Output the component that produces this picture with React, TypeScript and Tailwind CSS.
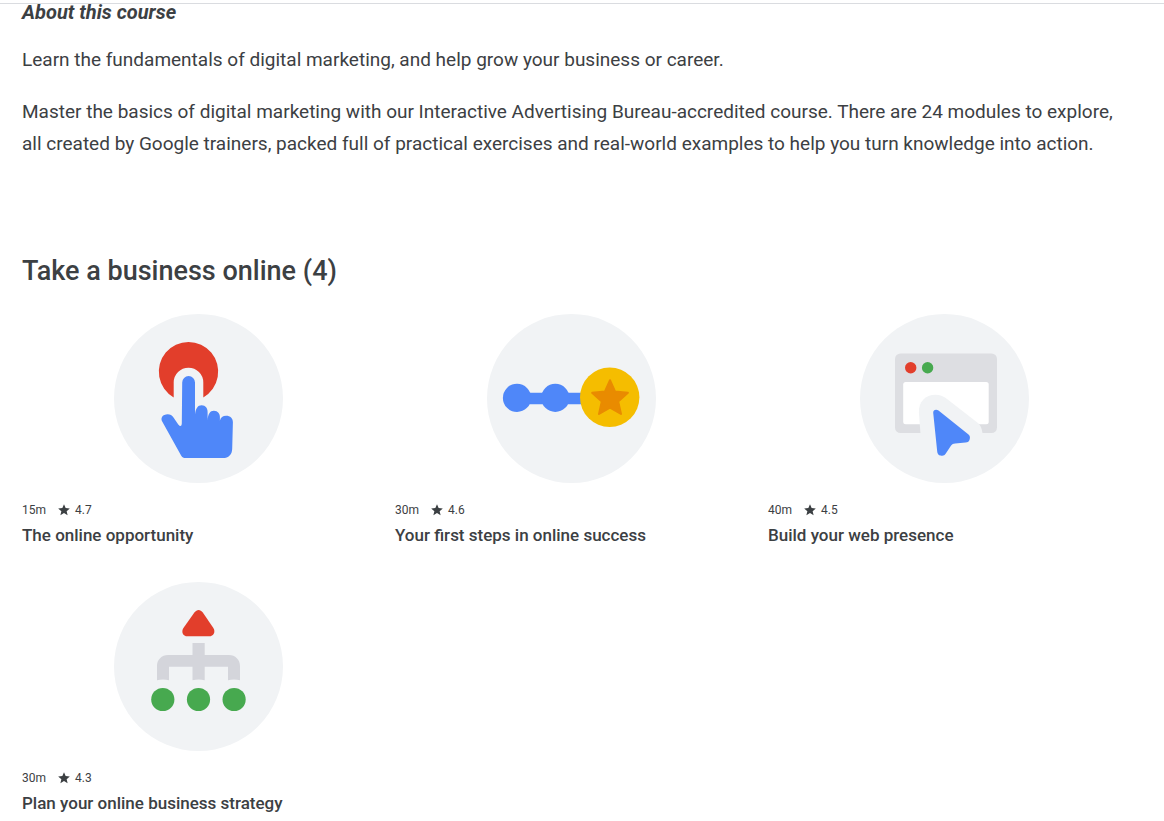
import type { ReactNode } from 'react';

type Lesson = {
  title: string;
  duration: string;
  rating: string;
  art: ReactNode;
};

function TapArt() {
  return (
    <>
      <path fill="#e23e2b" d="M65.7 89.4A29.7 29.7 0 1 1 95.3 89.4V74.5a14.8 14.8 0 0 0-29.6 0Z" />
      <path
        fill="#4f87f9"
        d="M74.2 74.5a6.4 6.4 0 0 1 12.8 0V106.500c.6-6 2.800-9.300 6.600-9.300 4 0 6 3 6 7V112.500c.3-6.500 2.500-9.700 6.300-9.700 4 0 6 3 6 6.500v3.500c.6-3.400 3-5 6.200-5 4.200 0 6.800 2.600 6.800 6.500l-.7 26.500c-.1 5.800-3.600 9.300-9.300 9.300H77.800c-2.300 0-3.600-.6-4.700-2.500L54.200 113.500c-2-3.500.5-7.200 5.500-7.200 2.500 0 4.300 1 5.800 3.200l4.600 6.700c1.800 2.600 3.500 2.400 3.700-.7Z"
      />
    </>
  );
}

function StepsArt() {
  return (
    <>
      <g fill="#4f87f9">
        <path d="M36 84.800h66v11.400H36z" />
        <circle cx="36" cy="89.900" r="14.100" />
        <circle cx="74.300" cy="89.900" r="14.100" />
      </g>
      <circle cx="128.700" cy="89.300" r="29.700" fill="#f5bd00" />
      <path
        fill="#e98b00"
        stroke="#e98b00"
        strokeWidth="2"
        strokeLinejoin="round"
        d="m129 72.200 5 11.200 12.900 1.400-9.700 8.600 2.800 12.600-11-6.300-11 6.300 2.800-12.600-9.700-8.600 12.900-1.400Z"
      />
    </>
  );
}

function BrowserArt() {
  return (
    <>
      <rect x="41" y="45.500" width="102" height="79.500" rx="5.500" fill="#dddee2" />
      <rect x="49.200" y="74" width="85.500" height="42.300" rx="2.500" fill="#fff" />
      <circle cx="56.700" cy="59.800" r="5.700" fill="#e23e2b" />
      <circle cx="73.600" cy="59.800" r="5.700" fill="#47a94f" />
      <path
        fill="#f1f3f5"
        d="M64.900 104.500c-.6-10.500 6.600-17.700 16.500-17.700 4.300 0 7.700 1.300 11.300 3.900l31.500 24.500c2.300 1.900 3.500 4.800 4.300 9.800v5H66.800Z"
      />
      <path
        fill="#4f87f9"
        d="M79.200 104.800c-.2-2.900 3-4 5.300-2.200l29.700 23.600c1.700 1.400 2.100 2.900 1.500 5.100-.6 2.300-1.800 3.200-4.200 3.300l-10.300.8c-2.200.2-2.900.5-4.100 2.200l-5.300 8c-1.300 2-2.900 2.600-5.200 2-2.200-.6-3.200-1.800-3.400-4.200Z"
      />
    </>
  );
}

function StrategyArt() {
  return (
    <>
      <path
        fill="#e23e2b"
        d="M86.400 36.500c2.500-3.500 5.900-3.500 8.400 0l10.400 15.200c2.700 4.200.5 8.600-4.200 8.600H79.500c-4.700 0-6.700-4.400-3.900-8.600Z"
      />
      <path
        fill="#d4d5db"
        d="M84.500 67h12.200v12H121c6.300 0 11 4.700 11 11v14.200q-6-1.400-12 0V90.700H96.700v13.500q-6.100-1.400-12.200 0V90.700H61v13.500q-6-1.400-12 0V90c0-6.300 4.700-11 11-11h24.500Z"
      />
      <g fill="#47a94f">
        <circle cx="54.800" cy="123.500" r="11.600" />
        <circle cx="90.500" cy="123.500" r="11.600" />
        <circle cx="126.100" cy="123.500" r="11.600" />
      </g>
    </>
  );
}

const lessons: Lesson[] = [
  { title: 'The online opportunity', duration: '15m', rating: '4.7', art: <TapArt /> },
  { title: 'Your first steps in online success', duration: '30m', rating: '4.6', art: <StepsArt /> },
  { title: 'Build your web presence', duration: '40m', rating: '4.5', art: <BrowserArt /> },
  { title: 'Plan your online business strategy', duration: '30m', rating: '4.3', art: <StrategyArt /> },
];

function LessonCard({ title, duration, rating, art }: Lesson) {
  return (
    <article className="flex flex-col">
      <svg viewBox="6 6 169 169" className="mb-[17px] size-[169px] self-center" aria-hidden="true">
        <circle cx="90.500" cy="90.500" r="84.500" fill="#f1f3f5" />
        {art}
      </svg>
      <div className="flex items-center text-xs leading-5">
        <span>{duration}</span>
        <svg viewBox="0 0 24 24" className="mr-1 ml-[11px] size-3.5 fill-current" aria-hidden="true">
          <path d="M12 17.270 18.180 21l-1.640-7.030L22 9.240l-7.190-.610L12 2 9.190 8.630 2 9.240l5.460 4.730L5.820 21z" />
        </svg>
        <span>{rating}</span>
      </div>
      <h3 className="mt-[3px] text-[17px] leading-6 font-medium">{title}</h3>
    </article>
  );
}

export default function App() {
  return (
    <div className="bg-white pt-[3px] font-['Roboto',sans-serif] text-[#3c4043]">
      <main className="border-t border-[#dadce0] pr-[43px] pb-4 pl-[22px]">
        <section>
          <h1 className="text-xl leading-4 font-bold italic">About this course</h1>
          <p className="mt-6 text-[19px] leading-8">
            Learn the fundamentals of digital marketing, and help grow your business or career.
          </p>
          <p className="mt-5 text-[19px] leading-8">
            Master the basics of digital marketing with our Interactive Advertising Bureau-accredited course. There are
            24 modules to explore, all created by Google trainers, packed full of practical exercises and real-world
            examples to help you turn knowledge into action.
          </p>
        </section>
        <section className="mt-[95px]">
          <h2 className="text-[27px] leading-8 font-medium">Take a business online (4)</h2>
          <div className="mt-[27px] grid grid-cols-3 gap-x-5 gap-y-[35px]">
            {lessons.map((lesson) => (
              <LessonCard key={lesson.title} {...lesson} />
            ))}
          </div>
        </section>
      </main>
    </div>
  );
}
